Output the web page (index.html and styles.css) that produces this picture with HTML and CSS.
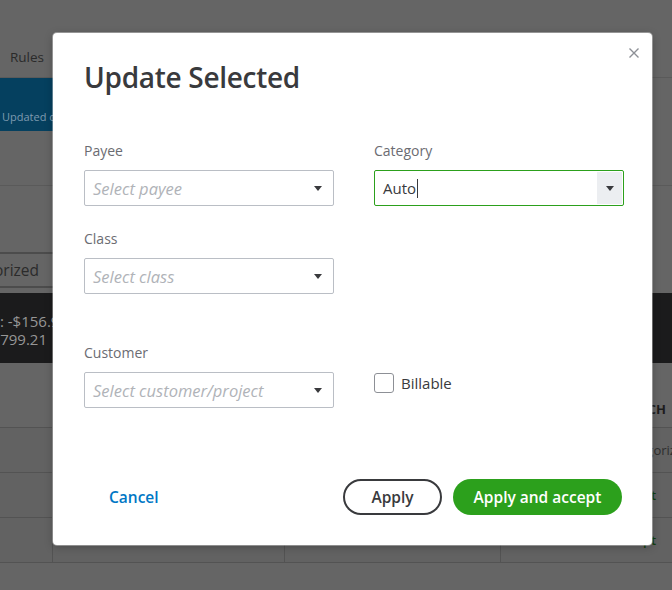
FILE: index.html
```html
<!DOCTYPE html>
<html lang="en">
<head>
<meta charset="utf-8">
<title>Update Selected</title>
<link rel="stylesheet" href="styles.css">
</head>
<body>
<div class="page">
  <div class="topbar"><span class="nav-item">Rules</span></div>
  <div class="banner-row"><div class="banner"><span class="banner-text">Updated on 04/12/2021</span></div></div>
  <div class="section"></div>
  <div class="gap-area"></div>
  <div class="tabs">
    <div class="tab"><div class="clip-left tab-clip"><span>Categorized</span></div></div>
  </div>
  <div class="tabs-gap"></div>
  <div class="summary">
    <div class="clip-left sum w1"><span>Total: -$156.90</span></div>
    <div class="clip-left sum w2"><span>$1,799.21</span></div>
  </div>
  <div class="table">
    <div class="trow thead">
      <div class="cell"></div><div class="cell"></div><div class="cell"></div>
      <div class="cell last"><span class="th">MATCH</span></div>
    </div>
    <div class="trow">
      <div class="cell"></div><div class="cell"></div><div class="cell"></div>
      <div class="cell last"><span class="muted">Categorized</span></div>
    </div>
    <div class="trow">
      <div class="cell"></div><div class="cell"></div><div class="cell"></div>
      <div class="cell last act"><span class="action">Accept</span></div>
    </div>
    <div class="trow">
      <div class="cell"></div><div class="cell"></div><div class="cell"></div>
      <div class="cell last act"><span class="action">Accept</span></div>
    </div>
  </div>
</div>

<div class="modal" role="dialog" aria-label="Update Selected">
  <button class="close" aria-label="Close">
    <svg width="10" height="10" viewBox="0 0 10 10"><path d="M0.5 0.5 L9.5 9.5 M9.5 0.5 L0.5 9.5" stroke="#8d9096" stroke-width="1.4" fill="none"/></svg>
  </button>
  <h1 class="title">Update Selected</h1>
  <div class="form-grid">
    <div class="field">
      <label class="label">Payee</label>
      <div class="select"><span class="placeholder">Select payee</span><svg class="tri" width="8" height="5" viewBox="0 0 8 5"><path d="M0 0 H8 L4 5 Z" fill="#393a3d"/></svg></div>
    </div>
    <div class="field">
      <label class="label">Category</label>
      <div class="select focused"><span class="value">Auto</span><span class="caret"></span><span class="drop-btn"><svg width="8" height="5" viewBox="0 0 8 5"><path d="M0 0 H8 L4 5 Z" fill="#393a3d"/></svg></span></div>
    </div>
    <div class="field">
      <label class="label">Class</label>
      <div class="select"><span class="placeholder">Select class</span><svg class="tri" width="8" height="5" viewBox="0 0 8 5"><path d="M0 0 H8 L4 5 Z" fill="#393a3d"/></svg></div>
    </div>
    <div></div>
    <div class="field row3">
      <label class="label">Customer</label>
      <div class="select"><span class="placeholder">Select customer/project</span><svg class="tri" width="8" height="5" viewBox="0 0 8 5"><path d="M0 0 H8 L4 5 Z" fill="#393a3d"/></svg></div>
    </div>
    <div class="billable row3">
      <span class="checkbox"></span><span class="check-label">Billable</span>
    </div>
  </div>
  <div class="footer">
    <button class="link-btn">Cancel</button>
    <div class="actions">
      <button class="btn-outline">Apply</button>
      <button class="btn-primary">Apply and accept</button>
    </div>
  </div>
</div>
</body>
</html>
```

FILE: styles.css
```css
* { box-sizing: border-box; }
html, body { margin: 0; padding: 0; }
body {
  width: 672px;
  height: 590px;
  overflow: hidden;
  position: relative;
  background: #656565;
  font-family: "Open Sans", "Liberation Sans", sans-serif;
  color: #393a3d;
}

/* ---------- dimmed background page ---------- */
.page { width: 672px; }
.topbar {
  height: 78px;
  border-bottom: 1px solid #5a5a5a;
  display: flex;
  align-items: flex-start;
  padding: 47px 0 0 10px;
}
.nav-item { font-size: 13.5px; line-height: 20px; color: #2a2a2a; }
.banner-row { height: 53px; }
.banner {
  width: 260px;
  height: 53px;
  background: #05405f;
  padding: 26px 0 0 2px;
}
.banner-text { font-size: 11px; line-height: 16px; color: #7f9bb0; white-space: nowrap; }
.section { height: 55px; border-bottom: 1px solid #5a5a5a; }
.gap-area { height: 66px; }
.tabs { height: 36px; }
.tab {
  width: 230px;
  height: 36px;
  border-top: 2px solid #4c4c4c;
  border-bottom: 2px solid #4c4c4c;
  display: flex;
  align-items: center;
}
.clip-left {
  display: flex;
  justify-content: flex-end;
  overflow: hidden;
  white-space: nowrap;
}
.tab-clip {
  width: 39px;
  font-size: 15.5px;
  line-height: 22px;
  color: #2b2b2b;
}
.tabs-gap { height: 5px; }
.summary {
  height: 70px;
  background: #1b1b1c;
  padding-top: 19px;
}
.sum {
  font-size: 15px;
  line-height: 18px;
  color: #969696;
}
.w1 { width: 68px; }
.w2 { width: 47px; }
.table { width: 672px; }
.trow {
  display: grid;
  grid-template-columns: 53px 232px 216px 1fr;
  height: 45px;
  border-bottom: 1px solid #535353;
  background: #626262;
}
.trow.thead { height: 65px; background: #656565; }
.cell { border-right: 1px solid #535353; display: flex; align-items: center; }
.cell.last { border-right: none; padding-left: 118px; white-space: nowrap; overflow: hidden; }
.cell.last.act { padding-left: 113px; }
.thead .cell.last { align-items: flex-start; padding-top: 36px; }
.th { font-size: 13px; font-weight: 700; line-height: 20px; color: #1c1c1c; }
.muted { font-size: 13px; color: #2e2e2e; }
.action { font-size: 13px; font-weight: 600; color: #123f0e; }

/* ---------- modal ---------- */
.modal {
  position: absolute;
  left: 53px;
  top: 33px;
  width: 599px;
  height: 512px;
  background: #ffffff;
  border-radius: 4px;
  box-shadow: 0 0 0 1px rgba(255,255,255,0.35), 0 2px 8px rgba(0,0,0,0.25);
  padding: 26px 28px 30px 31px;
}
.close {
  position: absolute;
  top: 15px;
  right: 13px;
  width: 10px;
  height: 10px;
  padding: 0;
  border: none;
  background: none;
  display: block;
}
.close svg { display: block; }
.title {
  margin: 0;
  font-size: 28px;
  font-weight: 600;
  line-height: 36px;
  color: #393a3d;
  letter-spacing: -0.3px;
}
.form-grid {
  margin-top: 46px;
  display: grid;
  grid-template-columns: 250px 250px;
  column-gap: 40px;
  row-gap: 23px;
}
.row3 { margin-top: 26px; }
.field { display: flex; flex-direction: column; }
.label {
  font-size: 14px;
  line-height: 20px;
  color: #6b6c72;
  margin-bottom: 9px;
}
.select {
  height: 36px;
  border: 1px solid #babec5;
  border-radius: 2px;
  display: flex;
  align-items: center;
  padding: 0 11px 0 8px;
  font-size: 15px;
}
.placeholder { font-style: italic; font-size: 16.5px; color: #b0b3b8; }
.tri { margin-left: auto; display: block; }
.select.focused {
  border-color: #2ca01c;
  padding: 0;
  padding-left: 8px;
}
.value { color: #393a3d; }
.caret {
  display: inline-block;
  width: 1px;
  height: 19px;
  background: #393a3d;
  margin-left: 1px;
}
.drop-btn {
  margin-left: auto;
  width: 25px;
  height: 32px;
  margin-right: 1px;
  background: #eceef1;
  display: flex;
  align-items: center;
  justify-content: center;
}
.drop-btn svg { display: block; }
.billable {
  align-self: end;
  height: 36px;
  display: flex;
  align-items: flex-start;
  padding-top: 1px;
}
.checkbox {
  width: 20px;
  height: 20px;
  border: 1px solid #8d9096;
  border-radius: 3px;
  background: #fff;
}
.check-label {
  margin-left: 7px;
  font-size: 15px;
  line-height: 20px;
  color: #393a3d;
}
.footer {
  margin-top: 71px;
  height: 36px;
  display: flex;
  align-items: center;
  justify-content: space-between;
}
.link-btn {
  border: none;
  background: none;
  padding: 0;
  margin-left: 25px;
  font-family: inherit;
  font-size: 15.5px;
  font-weight: 600;
  color: #0077c5;
}
.actions { display: flex; gap: 11px; margin-right: 2px; }
.btn-outline, .btn-primary {
  height: 36px;
  border-radius: 18px;
  font-family: inherit;
  font-size: 15.5px;
  font-weight: 600;
  padding: 0;
}
.btn-outline {
  width: 99px;
  border: 2px solid #393a3d;
  background: #fff;
  color: #393a3d;
}
.btn-primary {
  width: 169px;
  border: none;
  background: #2ca01c;
  color: #fff;
}
```
